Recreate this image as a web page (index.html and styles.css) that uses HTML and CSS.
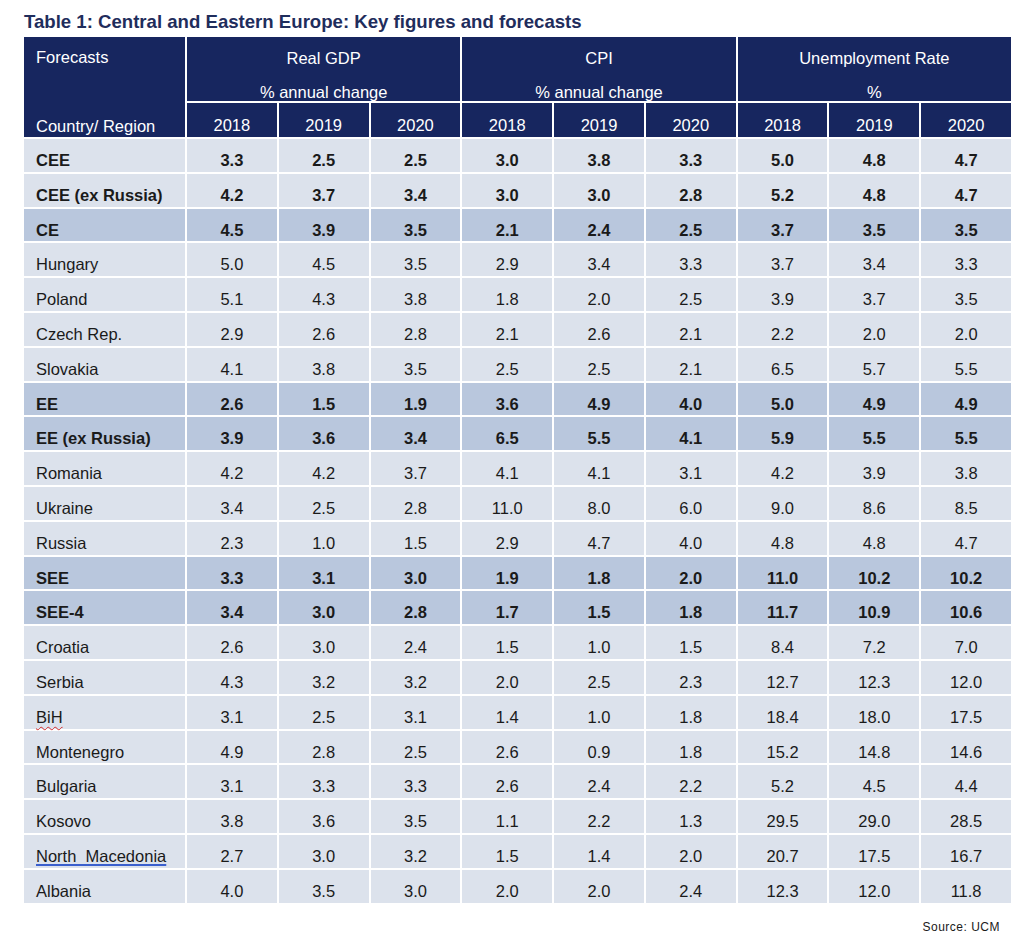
FILE: index.html
```html
<!DOCTYPE html>
<html lang="en">
<head>
<meta charset="utf-8">
<title>Table 1: Central and Eastern Europe: Key figures and forecasts</title>
<link rel="stylesheet" href="styles.css">
</head>
<body>
<div class="page">
  <h1 class="title">Table 1: Central and Eastern Europe: Key figures and forecasts</h1>
  <div class="table">
    <div class="hcell corner"><span>Forecasts</span><span>Country/ Region</span></div>
    <div class="hcell group"><span>Real GDP</span><span>% annual change</span></div>
    <div class="hcell group"><span>CPI</span><span>% annual change</span></div>
    <div class="hcell group"><span>Unemployment Rate</span><span>%</span></div>
    <div class="hcell year">2018</div><div class="hcell year">2019</div><div class="hcell year">2020</div>
    <div class="hcell year">2018</div><div class="hcell year">2019</div><div class="hcell year">2020</div>
    <div class="hcell year">2018</div><div class="hcell year">2019</div><div class="hcell year">2020</div>

    <div class="row bold"><div class="c name">CEE</div><div class="c">3.3</div><div class="c">2.5</div><div class="c">2.5</div><div class="c">3.0</div><div class="c">3.8</div><div class="c">3.3</div><div class="c">5.0</div><div class="c">4.8</div><div class="c">4.7</div></div>
    <div class="row bold"><div class="c name">CEE (ex Russia)</div><div class="c">4.2</div><div class="c">3.7</div><div class="c">3.4</div><div class="c">3.0</div><div class="c">3.0</div><div class="c">2.8</div><div class="c">5.2</div><div class="c">4.8</div><div class="c">4.7</div></div>
    <div class="row bold hi"><div class="c name">CE</div><div class="c">4.5</div><div class="c">3.9</div><div class="c">3.5</div><div class="c">2.1</div><div class="c">2.4</div><div class="c">2.5</div><div class="c">3.7</div><div class="c">3.5</div><div class="c">3.5</div></div>
    <div class="row"><div class="c name">Hungary</div><div class="c">5.0</div><div class="c">4.5</div><div class="c">3.5</div><div class="c">2.9</div><div class="c">3.4</div><div class="c">3.3</div><div class="c">3.7</div><div class="c">3.4</div><div class="c">3.3</div></div>
    <div class="row"><div class="c name">Poland</div><div class="c">5.1</div><div class="c">4.3</div><div class="c">3.8</div><div class="c">1.8</div><div class="c">2.0</div><div class="c">2.5</div><div class="c">3.9</div><div class="c">3.7</div><div class="c">3.5</div></div>
    <div class="row"><div class="c name">Czech Rep.</div><div class="c">2.9</div><div class="c">2.6</div><div class="c">2.8</div><div class="c">2.1</div><div class="c">2.6</div><div class="c">2.1</div><div class="c">2.2</div><div class="c">2.0</div><div class="c">2.0</div></div>
    <div class="row"><div class="c name">Slovakia</div><div class="c">4.1</div><div class="c">3.8</div><div class="c">3.5</div><div class="c">2.5</div><div class="c">2.5</div><div class="c">2.1</div><div class="c">6.5</div><div class="c">5.7</div><div class="c">5.5</div></div>
    <div class="row bold hi"><div class="c name">EE</div><div class="c">2.6</div><div class="c">1.5</div><div class="c">1.9</div><div class="c">3.6</div><div class="c">4.9</div><div class="c">4.0</div><div class="c">5.0</div><div class="c">4.9</div><div class="c">4.9</div></div>
    <div class="row bold hi"><div class="c name">EE (ex Russia)</div><div class="c">3.9</div><div class="c">3.6</div><div class="c">3.4</div><div class="c">6.5</div><div class="c">5.5</div><div class="c">4.1</div><div class="c">5.9</div><div class="c">5.5</div><div class="c">5.5</div></div>
    <div class="row"><div class="c name">Romania</div><div class="c">4.2</div><div class="c">4.2</div><div class="c">3.7</div><div class="c">4.1</div><div class="c">4.1</div><div class="c">3.1</div><div class="c">4.2</div><div class="c">3.9</div><div class="c">3.8</div></div>
    <div class="row"><div class="c name">Ukraine</div><div class="c">3.4</div><div class="c">2.5</div><div class="c">2.8</div><div class="c">11.0</div><div class="c">8.0</div><div class="c">6.0</div><div class="c">9.0</div><div class="c">8.6</div><div class="c">8.5</div></div>
    <div class="row"><div class="c name">Russia</div><div class="c">2.3</div><div class="c">1.0</div><div class="c">1.5</div><div class="c">2.9</div><div class="c">4.7</div><div class="c">4.0</div><div class="c">4.8</div><div class="c">4.8</div><div class="c">4.7</div></div>
    <div class="row bold hi"><div class="c name">SEE</div><div class="c">3.3</div><div class="c">3.1</div><div class="c">3.0</div><div class="c">1.9</div><div class="c">1.8</div><div class="c">2.0</div><div class="c">11.0</div><div class="c">10.2</div><div class="c">10.2</div></div>
    <div class="row bold hi"><div class="c name">SEE-4</div><div class="c">3.4</div><div class="c">3.0</div><div class="c">2.8</div><div class="c">1.7</div><div class="c">1.5</div><div class="c">1.8</div><div class="c">11.7</div><div class="c">10.9</div><div class="c">10.6</div></div>
    <div class="row"><div class="c name">Croatia</div><div class="c">2.6</div><div class="c">3.0</div><div class="c">2.4</div><div class="c">1.5</div><div class="c">1.0</div><div class="c">1.5</div><div class="c">8.4</div><div class="c">7.2</div><div class="c">7.0</div></div>
    <div class="row"><div class="c name">Serbia</div><div class="c">4.3</div><div class="c">3.2</div><div class="c">3.2</div><div class="c">2.0</div><div class="c">2.5</div><div class="c">2.3</div><div class="c">12.7</div><div class="c">12.3</div><div class="c">12.0</div></div>
    <div class="row"><div class="c name"><span class="spell">BiH</span></div><div class="c">3.1</div><div class="c">2.5</div><div class="c">3.1</div><div class="c">1.4</div><div class="c">1.0</div><div class="c">1.8</div><div class="c">18.4</div><div class="c">18.0</div><div class="c">17.5</div></div>
    <div class="row"><div class="c name">Montenegro</div><div class="c">4.9</div><div class="c">2.8</div><div class="c">2.5</div><div class="c">2.6</div><div class="c">0.9</div><div class="c">1.8</div><div class="c">15.2</div><div class="c">14.8</div><div class="c">14.6</div></div>
    <div class="row"><div class="c name">Bulgaria</div><div class="c">3.1</div><div class="c">3.3</div><div class="c">3.3</div><div class="c">2.6</div><div class="c">2.4</div><div class="c">2.2</div><div class="c">5.2</div><div class="c">4.5</div><div class="c">4.4</div></div>
    <div class="row"><div class="c name">Kosovo</div><div class="c">3.8</div><div class="c">3.6</div><div class="c">3.5</div><div class="c">1.1</div><div class="c">2.2</div><div class="c">1.3</div><div class="c">29.5</div><div class="c">29.0</div><div class="c">28.5</div></div>
    <div class="row"><div class="c name"><span class="grammar">North&nbsp; Macedonia</span></div><div class="c">2.7</div><div class="c">3.0</div><div class="c">3.2</div><div class="c">1.5</div><div class="c">1.4</div><div class="c">2.0</div><div class="c">20.7</div><div class="c">17.5</div><div class="c">16.7</div></div>
    <div class="row"><div class="c name">Albania</div><div class="c">4.0</div><div class="c">3.5</div><div class="c">3.0</div><div class="c">2.0</div><div class="c">2.0</div><div class="c">2.4</div><div class="c">12.3</div><div class="c">12.0</div><div class="c">11.8</div></div>
  </div>
  <p class="source">Source: UCM</p>
</div>
</body>
</html>
```

FILE: styles.css
```css
* { box-sizing: border-box; }
html, body { margin: 0; padding: 0; background: #ffffff; }
body { font-family: "Liberation Sans", Arial, sans-serif; color: #1a1a1a; }

.page { width: 1024px; padding: 11px 13px 0 24px; }

.title {
  margin: 0 0 4px 0;
  font-size: 18.6px;
  line-height: 22px;
  font-weight: bold;
  color: #1f2d5c;
}

.table {
  width: 987px;
  display: grid;
  grid-template-columns: 161px repeat(9, 1fr);
  grid-template-rows: 64px 34px;
  grid-auto-rows: 32.8px;
  gap: 2px;
  background: #ffffff;
}

.hcell {
  background: #17265f;
  color: #ffffff;
  font-size: 16.5px;
  line-height: 20px;
}

.corner {
  grid-row: 1 / span 2;
  grid-column: 1;
  display: flex;
  flex-direction: column;
  justify-content: space-between;
  padding: 10px 12px 1px 12px;
}

.group {
  grid-column: span 3;
  display: flex;
  flex-direction: column;
  align-items: center;
  gap: 14px;
  padding-top: 11px;
}

.year {
  text-align: center;
  padding-top: 12px;
}

.row { display: contents; }

.c {
  background: #dce2ec;
  font-size: 16.5px;
  line-height: 20px;
  padding-top: 11px;
  text-align: center;
  white-space: nowrap;
}

.c.name { text-align: left; padding-left: 12px; }

.row.hi .c { background: #b9c7dd; }
.row.bold .c { font-weight: bold; }

.spell {
  text-decoration: underline wavy #d42a2a;
  text-decoration-thickness: 1px;
  text-underline-offset: 3px;
}

.grammar {
  text-decoration: underline #3a5fcd;
  text-decoration-thickness: 2px;
  text-underline-offset: 2px;
}

.source {
  margin: 16px 0 0 0;
  text-align: right;
  padding-right: 11px;
  font-size: 12px;
  line-height: 16px;
  letter-spacing: 0.5px;
  color: #1a1a1a;
}
```
